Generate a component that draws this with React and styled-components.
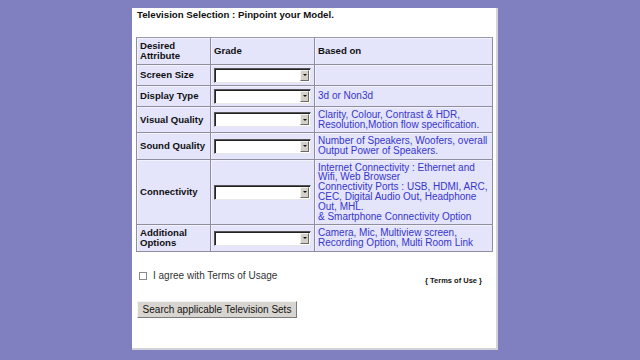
import React from "react";
import styled, { createGlobalStyle } from "styled-components";

const GlobalStyle = createGlobalStyle`
  html, body {
    margin: 0;
    padding: 0;
    background: #8080c0;
  }
  body {
    font-family: "Liberation Sans", Arial, sans-serif;
    font-size: 10px;
  }
`;

const Page = styled.div`
  width: 640px;
  height: 360px;
  padding: 8px 0 0 132px;
  box-sizing: border-box;
  background: #8080c0;
`;

const Panel = styled.div`
  width: 356px;
  height: 338px;
  background: #ffffff;
  border-right: 2px solid #d2d2d8;
  border-bottom: 2px solid #d2d2d8;
  padding: 2px 4px 0 4px;
  box-sizing: content-box;
`;

const Title = styled.h1`
  margin: 0 0 17px 1px;
  font-size: 9.7px;
  line-height: 10px;
  font-weight: bold;
  color: #111;
`;

const Table = styled.table`
  width: 356px;
  border-collapse: collapse;
  background: #e4e4fb;
  border: 1px solid #c4c4d4;
  table-layout: fixed;
`;

const Row = styled.tr`
  height: ${(p) => p.$h}px;
`;

const Cell = styled.td`
  border: 1px solid #8e8e9e;
  border-top-color: #9a9aaa;
  padding: 0 3px;
  vertical-align: middle;
  white-space: nowrap;
  font-size: ${(p) => (p.$label ? "9.6px" : "10px")};
  font-weight: ${(p) => (p.$label ? "bold" : "normal")};
  line-height: 9.8px;
  color: ${(p) => (p.$info ? "#3636cc" : "#111")};
  box-shadow: inset 1px 1px 0 #f2f2ff;
`;

const SelectBox = styled.span`
  display: flex;
  align-items: center;
  width: 92px;
  height: 11px;
  background: #fff;
  border: 1px solid;
  border-color: #555 #e8e8e8 #e8e8e8 #555;
  box-shadow: inset 1px 1px 0 #222;
  padding: 1px 1px 1px 2px;
`;

const Select = styled.select`
  flex: 1;
  min-width: 0;
  height: 11px;
  border: none;
  background: transparent;
  appearance: none;
  font-size: 9px;
  padding: 0;
  outline: none;
`;

const DropButton = styled.span`
  display: flex;
  align-items: center;
  justify-content: center;
  width: 7px;
  height: 9px;
  background: #d4d0c8;
  border: 1px solid;
  border-color: #f4f4f4 #6a6a6a #6a6a6a #f4f4f4;
  &::after {
    content: "";
    border-left: 2px solid transparent;
    border-right: 2px solid transparent;
    border-top: 2px solid #111;
  }
`;

const Dropdown = () => (
  <SelectBox>
    <Select defaultValue="">
      <option value=""></option>
    </Select>
    <DropButton />
  </SelectBox>
);

const AgreeRow = styled.div`
  display: flex;
  justify-content: space-between;
  align-items: flex-start;
  margin: 19px 10px 0 3px;
`;

const Agree = styled.label`
  display: flex;
  align-items: center;
  gap: 6px;
  font-size: 10px;
  line-height: 10px;
  color: #333;
`;

const Check = styled.input`
  appearance: none;
  width: 8px;
  height: 8px;
  margin: 0;
  border: 1px solid #8a8a8a;
  background: #fff;
`;

const TermsLink = styled.span`
  margin-top: 5px;
  font-size: 7.5px;
  font-weight: bold;
  color: #111;
`;

const Button = styled.button`
  display: block;
  margin: 16px 0 0 1px;
  width: 160px;
  height: 17px;
  padding: 0;
  font-family: "Liberation Sans", Arial, sans-serif;
  font-size: 10px;
  color: #111;
  background: #d8d5d0;
  border: 1px solid;
  border-color: #f4f4f4 #7a7a7a #7a7a7a #f4f4f4;
`;

const rows = [
  { label: "Screen Size", h: 21, info: [] },
  { label: "Display Type", h: 21, info: ["3d or Non3d"] },
  {
    label: "Visual Quality",
    h: 26,
    info: ["Clarity, Colour, Contrast & HDR,", "Resolution,Motion flow specification."],
  },
  {
    label: "Sound Quality",
    h: 27,
    info: ["Number of Speakers, Woofers, overall", "Output Power of Speakers."],
  },
  {
    label: "Connectivity",
    h: 65,
    info: [
      "Internet Connectivity : Ethernet and",
      "Wifi, Web Browser",
      "Connectivity Ports : USB, HDMI, ARC,",
      "CEC, Digital Audio Out, Headphone",
      "Out, MHL.",
      "& Smartphone Connectivity Option",
    ],
  },
  {
    label: ["Additional", "Options"],
    h: 27,
    info: ["Camera, Mic, Multiview screen,", "Recording Option, Multi Room Link"],
  },
];

const lines = (arr) =>
  arr.map((t, i) => (
    <React.Fragment key={i}>
      {i > 0 && <br />}
      {t}
    </React.Fragment>
  ));

export default function App() {
  return (
    <Page>
      <GlobalStyle />
      <Panel>
        <Title>Television Selection : Pinpoint your Model.</Title>
        <Table>
          <colgroup>
            <col style={{ width: 74 }} />
            <col style={{ width: 104 }} />
            <col style={{ width: 178 }} />
          </colgroup>
          <tbody>
            <Row $h={27}>
              <Cell $label>
                Desired
                <br />
                Attribute
              </Cell>
              <Cell $label>Grade</Cell>
              <Cell $label>Based on</Cell>
            </Row>
            {rows.map((r, i) => (
              <Row key={i} $h={r.h}>
                <Cell $label>{Array.isArray(r.label) ? lines(r.label) : r.label}</Cell>
                <Cell>
                  <Dropdown />
                </Cell>
                <Cell $info>{lines(r.info)}</Cell>
              </Row>
            ))}
          </tbody>
        </Table>
        <AgreeRow>
          <Agree>
            <Check type="checkbox" />
            I agree with Terms of Usage
          </Agree>
          <TermsLink>{"{ Terms of Use }"}</TermsLink>
        </AgreeRow>
        <Button>Search applicable Television Sets</Button>
      </Panel>
    </Page>
  );
}
